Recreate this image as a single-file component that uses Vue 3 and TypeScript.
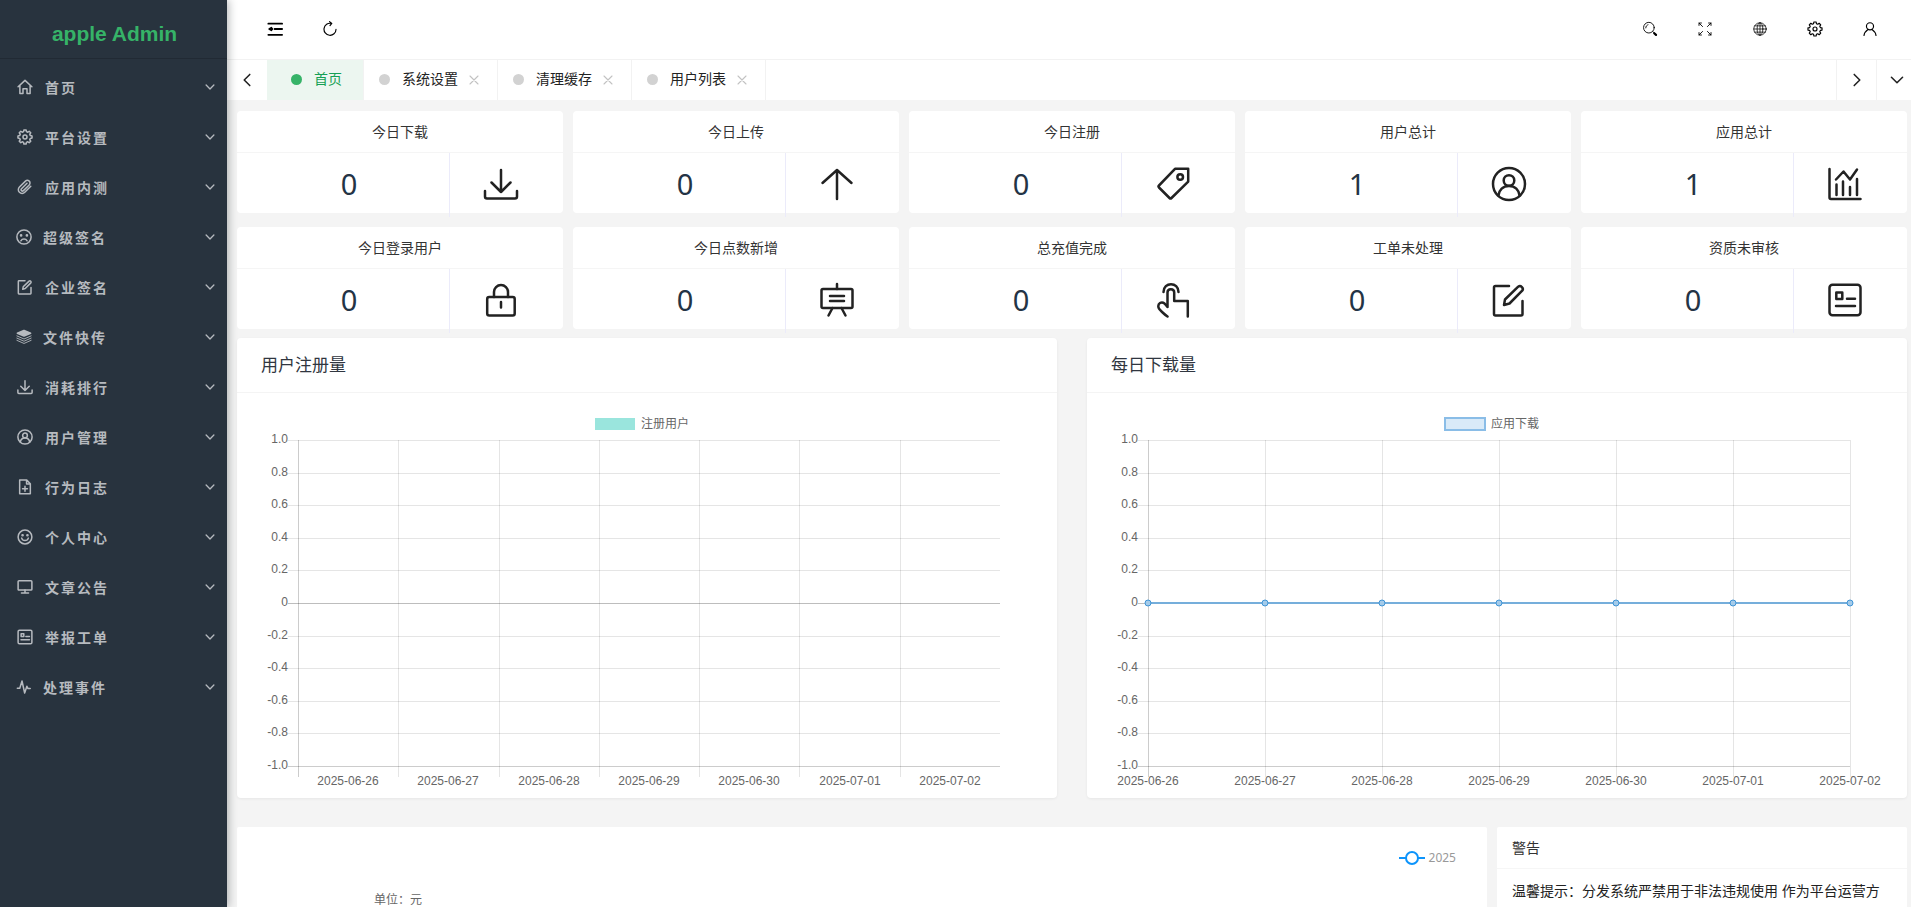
<script setup lang="ts">
import { ref } from 'vue'

interface MenuItem { label: string; icon: string; wide?: boolean }
interface Stat { title: string; value: number; icon: string }
interface Tab { label: string; closable: boolean }
interface Chart { title: string; series: string; kind: 'bar' | 'line'; columns: number[]; labels: number[] }

const menu: MenuItem[] = [
  { label: '首页', icon: 'home' },
  { label: '平台设置', icon: 'gear' },
  { label: '应用内测', icon: 'clip' },
  { label: '超级签名', icon: 'sad', wide: true },
  { label: '企业签名', icon: 'edit' },
  { label: '文件快传', icon: 'layers', wide: true },
  { label: '消耗排行', icon: 'download' },
  { label: '用户管理', icon: 'user-circle' },
  { label: '行为日志', icon: 'file' },
  { label: '个人中心', icon: 'smile' },
  { label: '文章公告', icon: 'monitor' },
  { label: '举报工单', icon: 'form' },
  { label: '处理事件', icon: 'pulse', wide: true },
]

const tools = [
  { label: '搜索', icon: 'search' },
  { label: '全屏', icon: 'fullscreen' },
  { label: '语言', icon: 'globe' },
  { label: '设置', icon: 'gear' },
  { label: '用户', icon: 'person' },
]

const tabs: Tab[] = [
  { label: '首页', closable: false },
  { label: '系统设置', closable: true },
  { label: '清理缓存', closable: true },
  { label: '用户列表', closable: true },
]
const activeTab = ref('首页')

const stats: Stat[] = [
  { title: '今日下载', value: 0, icon: 'download' },
  { title: '今日上传', value: 0, icon: 'upload' },
  { title: '今日注册', value: 0, icon: 'tag' },
  { title: '用户总计', value: 1, icon: 'user-circle' },
  { title: '应用总计', value: 1, icon: 'chart' },
  { title: '今日登录用户', value: 0, icon: 'lock' },
  { title: '今日点数新增', value: 0, icon: 'board' },
  { title: '总充值完成', value: 0, icon: 'touch' },
  { title: '工单未处理', value: 0, icon: 'edit' },
  { title: '资质未审核', value: 0, icon: 'form' },
]

const dates = ['2025-06-26', '2025-06-27', '2025-06-28', '2025-06-29', '2025-06-30', '2025-07-01', '2025-07-02']
const plot = { left: 61, right: 763, top: 47, bottom: 373, width: 702 }

const rows = ['1.0', '0.8', '0.6', '0.4', '0.2', '0', '-0.2', '-0.4', '-0.6', '-0.8', '-1.0'].map((text, i) => ({
  text,
  y: Math.round(plot.top + (i * (plot.bottom - plot.top)) / 10),
}))

const spread = (parts: number, offset: number) =>
  dates.map((_, i) => Math.round(plot.left + (plot.width * (i + offset)) / parts))

const charts: Chart[] = [
  { title: '用户注册量', series: '注册用户', kind: 'bar', columns: spread(7, 0), labels: spread(7, 0.5) },
  { title: '每日下载量', series: '应用下载', kind: 'line', columns: spread(6, 0), labels: spread(6, 0) },
]

// Eight-toothed outline centred on a 36-unit icon grid.
const gearPath =
  Array.from({ length: 8 }, (_, i) => {
    const at = (radius: number, shift: number) => {
      const angle = ((i * 45 + shift) * Math.PI) / 180
      return `${(18 + radius * Math.sin(angle)).toFixed(1)} ${(18 - radius * Math.cos(angle)).toFixed(1)}`
    }
    return `${i ? 'L' : 'M'}${at(12.4, -15)}L${at(16, -9)}L${at(16, 9)}L${at(12.4, 15)}`
  }).join('') + 'Z'
</script>

<template>
  <svg class="sprite" aria-hidden="true">
    <symbol id="home" viewBox="0 0 36 36"><path d="M2.5 17.5 18 3l15.500 14.500M6.500 14v18.500h7V22h9v10.500h7V14" /></symbol>
    <symbol id="gear" viewBox="0 0 36 36"><path :d="gearPath" /><circle cx="18" cy="18" r="4.500" /></symbol>
    <symbol id="clip" viewBox="0 0 36 36"><path d="M31 16.500 17.500 30a8.300 8.300 0 0 1-12-12L19 4.800a6 6 0 0 1 8.500 8.500L14.500 26.200a3 3 0 0 1-4.300-4.300L22.500 9.600" /></symbol>
    <symbol id="sad" viewBox="0 0 36 36"><circle cx="18" cy="18" r="16" /><circle cx="11.500" cy="14.500" r="1.300" class="solid" /><circle cx="24.500" cy="14.500" r="1.300" class="solid" /><path d="M11 26.500c3-5 11-5 14 0" /></symbol>
    <symbol id="smile" viewBox="0 0 36 36"><circle cx="18" cy="18" r="15.500" /><circle cx="12.500" cy="14" r="1.300" class="solid" /><circle cx="23.500" cy="14" r="1.300" class="solid" /><path d="M10.500 20.500c2 7.500 13 7.500 15 0" /></symbol>
    <symbol id="layers" viewBox="0 0 36 36"><path class="solid" d="M18 3 33 9.500 18 16 3 9.500z" /><path class="thin" d="M2 15.500 18 22.500l16-7M2 20.500 18 27.500l16-7M2 25.500 18 32.500l16-7" /></symbol>
    <symbol id="file" viewBox="0 0 36 36"><path d="M6 2.500h16l8 8V33H6zM21.500 3v8.500H30M18 16.500v11M12.500 22h11" /></symbol>
    <symbol id="monitor" viewBox="0 0 36 36"><rect x="2.500" y="4" width="31" height="21" rx="2" /><path d="M18 25v6M10 31.500h16" /></symbol>
    <symbol id="pulse" viewBox="0 0 36 36"><path d="M3 21h5.500l5-16.500 6 27 5-15 2.500 5H32" /></symbol>
    <symbol id="download" viewBox="0 0 36 36"><path d="M18 4v22M8.500 16.500 18 26l9.500-9.500M2 25v5.500q0 2 2 2h28q2 0 2-2V25" /></symbol>
    <symbol id="upload" viewBox="0 0 36 36"><path d="M18 33V4M3.500 17 18 4l14.500 13" /></symbol>
    <symbol id="tag" viewBox="0 0 36 36"><path d="M20 2.800h13.200v12.800L16.500 32q-1 1-2 0L4 21.500q-1-1 0-2z" /><circle cx="25.200" cy="11" r="2.800" /></symbol>
    <symbol id="user-circle" viewBox="0 0 36 36"><circle cx="18" cy="18" r="16" /><circle cx="18" cy="14.500" r="5.300" /><path d="M7.500 29.500C8 24 12 20 18 20s10 4 10.500 9.500" /></symbol>
    <symbol id="chart" viewBox="0 0 36 36"><path d="M2.500 3v28.500q0 1.500 1.500 1.500h29.500M9 13.500l7.500-8 6.500 8L30 3.500M9.500 18.500V29M16 15.500V29M23 21v8M30 13v16" /></symbol>
    <symbol id="lock" viewBox="0 0 36 36"><rect x="4.200" y="15" width="27.500" height="18.500" rx="2" /><path d="M11 15v-5a7 7 0 0 1 14 0v5M18 20v5.500" /></symbol>
    <symbol id="board" viewBox="0 0 36 36"><rect x="2.500" y="7" width="31" height="19" rx="1.500" /><path d="M18 2v5M13.500 26 9.500 33.500M22.500 26l4 7.500M11 14h14M11 19h14" /></symbol>
    <symbol id="touch" viewBox="0 0 36 36"><path d="M8.500 10C8.500-.5 23.500-.5 23.500 10M12.500 25V10.500c0-4.500 6.700-4.500 6.700 0V19h13.600v15.500M12.500 25 9.500 21.500C6.500 19 2.500 21.500 3.500 25.500 4 27.500 9.500 32.500 12.500 34.500" /></symbol>
    <symbol id="edit" viewBox="0 0 36 36"><path d="M18 4H4.500q-1.500 0-1.500 1.500V32q0 1.500 1.500 1.500H30q1.500 0 1.500-1.500V19M13 23l1-5.500L27.200 4.700c2.500-2 6 1.500 4 4L18.500 21.500z" /></symbol>
    <symbol id="form" viewBox="0 0 36 36"><rect x="2.500" y="2.800" width="31" height="30.500" rx="3" /><path d="M9.300 10.500h6v6.500h-6zM20 16.800h8M9 24h19" /></symbol>
    <symbol id="search" viewBox="0 0 36 36"><circle cx="15.500" cy="15" r="12" /><path d="M8.500 15.500c0-3.500 2-6 5-7M24.500 24l1.500 1.500M26.500 26l5.500 5" /><path class="handle" d="m27.500 27.500 4 3.800" /></symbol>
    <symbol id="fullscreen" viewBox="0 0 36 36"><path d="M4.500 10V4.500H10M4.500 4.500l8 8M26 4.500h5.500V10M31.500 4.500l-8 8M4.500 26v5.500H10M4.500 31.500l8-8M26 31.500h5.500V26M31.500 31.500l-8-8" /></symbol>
    <symbol id="globe" viewBox="0 0 36 36"><circle cx="18" cy="18" r="14" /><ellipse cx="18" cy="18" rx="6.500" ry="14" /><path d="M18 4v28M4 18h28M6 11h24M6 25h24" /></symbol>
    <symbol id="person" viewBox="0 0 36 36"><circle cx="18" cy="12" r="8" /><path d="M4.500 32.500c.5-7 4-10 9-13.500M31.500 32.500c-.5-7-4-10-9-13.500" /></symbol>
    <symbol id="collapse" viewBox="0 0 36 36"><path d="M3 6h31M17 18h17M3 31h31" /><path class="solid" d="M5 18l5-3v6z" /><path d="M9 18h3" /></symbol>
    <symbol id="refresh" viewBox="0 0 36 36"><path d="M21 5.500A13.500 13.500 0 1 0 31.500 19M17 1.500l5 4-4 5" /></symbol>
    <symbol id="chevron" viewBox="0 0 36 36"><path d="m8 13 10 10 10-10" /></symbol>
    <symbol id="close" viewBox="0 0 36 36"><path d="m9 9 18 18M27 9 9 27" /></symbol>
  </svg>

  <div class="layout">
    <aside class="sidebar">
      <a class="logo" href="#">apple Admin</a>
      <nav>
        <ul class="menu">
          <li v-for="item in menu" :key="item.label">
            <a href="#" :class="{ wide: item.wide }">
              <svg class="icon"><use :href="`#${item.icon}`" /></svg>
              <span>{{ item.label }}</span>
              <svg class="icon arrow"><use href="#chevron" /></svg>
            </a>
          </li>
        </ul>
      </nav>
    </aside>

    <div class="page">
      <header class="topbar">
        <button type="button" aria-label="收起菜单"><svg class="icon bars"><use href="#collapse" /></svg></button>
        <button type="button" aria-label="刷新"><svg class="icon fine"><use href="#refresh" /></svg></button>
        <div class="tools">
          <button v-for="tool in tools" :key="tool.label" type="button" :aria-label="tool.label">
            <svg class="icon fine" :class="tool.icon"><use :href="`#${tool.icon}`" /></svg>
          </button>
        </div>
      </header>

      <div class="tabbar">
        <button class="step" type="button" aria-label="向左"><svg class="icon left"><use href="#chevron" /></svg></button>
        <ul class="tabs">
          <li v-for="tab in tabs" :key="tab.label" :class="{ active: activeTab === tab.label, fixed: !tab.closable }">
            <a href="#" @click.prevent="activeTab = tab.label"><i class="dot"></i>{{ tab.label }}</a>
            <button v-if="tab.closable" type="button" aria-label="关闭"><svg class="icon"><use href="#close" /></svg></button>
          </li>
        </ul>
        <button class="step ruled" type="button" aria-label="向右"><svg class="icon right"><use href="#chevron" /></svg></button>
        <button class="step ruled" type="button" aria-label="更多"><svg class="icon"><use href="#chevron" /></svg></button>
      </div>

      <main class="content">
        <section class="stats">
          <article v-for="stat in stats" :key="stat.title" class="stat">
            <h3>{{ stat.title }}</h3>
            <div class="stat-body">
              <strong>{{ stat.value }}</strong>
              <span class="stat-icon"><svg><use :href="`#${stat.icon}`" /></svg></span>
            </div>
          </article>
        </section>

        <section class="charts">
          <article v-for="chart in charts" :key="chart.title" class="chart">
            <h2>{{ chart.title }}</h2>
            <svg class="plot" viewBox="0 0 820 405" role="img" :aria-label="chart.title">
              <rect v-if="chart.kind === 'bar'" x="358" y="25" width="40" height="12" fill="#9ae5dd" />
              <rect v-else class="swatch" x="358" y="25" width="40" height="12" />
              <text x="404" y="35">{{ chart.series }}</text>
              <g v-for="row in rows" :key="row.text">
                <rect :class="{ axis: row.text === '0', base: row.text === '-1.0' }" x="51" :y="row.y" width="712" height="1" />
                <text x="51" :y="row.y + 3" text-anchor="end">{{ row.text }}</text>
              </g>
              <rect v-for="(x, i) in chart.columns" :key="x" :class="{ base: i === 0 }" :x="x" y="47" width="1" height="337" />
              <text v-for="(x, i) in chart.labels" :key="dates[i]" :x="x" y="392" text-anchor="middle">{{ dates[i] }}</text>
              <g v-if="chart.kind === 'line'" class="series">
                <path d="M61 210H763" />
                <circle v-for="x in chart.columns" :key="x" :cx="x" cy="210" r="3" />
              </g>
            </svg>
          </article>
        </section>

        <section class="bottom">
          <article class="income">
            <div class="legend">
              <svg viewBox="0 0 26 16"><path d="M0 8h26" /><circle cx="13" cy="8" r="6" /></svg>
              <span>2025</span>
            </div>
            <p>单位：元</p>
          </article>
          <article class="warning">
            <h3>警告</h3>
            <p>温馨提示：分发系统严禁用于非法违规使用 作为平台运营方</p>
          </article>
        </section>
      </main>
    </div>
  </div>
</template>

<style>
body {
  margin: 0;
  background: #f4f4f4;
}
</style>

<style scoped>
.sprite {
  position: absolute;
  width: 0;
  height: 0;
}
symbol {
  fill: none;
  stroke: currentColor;
  stroke-linecap: round;
  stroke-linejoin: round;
}
.solid {
  fill: currentColor;
}
.thin {
  stroke-width: 2;
}
.handle {
  stroke-width: 5;
}
ul,
h2,
h3,
p {
  margin: 0;
  padding: 0;
  list-style: none;
  font-weight: 400;
}
a {
  color: inherit;
  text-decoration: none;
}
button {
  display: flex;
  align-items: center;
  justify-content: center;
  padding: 0;
  border: 0;
  background: none;
  color: inherit;
  font: inherit;
  cursor: pointer;
}
.icon {
  flex: none;
  width: 16px;
  height: 16px;
  stroke-width: 3;
}
.fine {
  stroke-width: 2.6;
}
.bars {
  stroke-width: 4;
}
.search,
.fullscreen {
  stroke-width: 2;
}
.globe {
  stroke-width: 1.7;
}
.layout {
  display: flex;
  height: 100vh;
  overflow: hidden;
  color: #222;
  font: 14px/24px "Noto Sans", "Noto Sans CJK SC", sans-serif;
}
.sidebar {
  z-index: 1;
  flex: none;
  width: 227px;
  background: #28333e;
  box-shadow: 2px 0 8px rgba(29, 35, 41, 0.3);
  color: #b6babf;
}
.logo {
  display: block;
  box-sizing: border-box;
  height: 59px;
  padding: 10px 0 0 2px;
  border-bottom: 1px solid #212a34;
  color: #36b368;
  font: bold 21px/48px "Liberation Sans", Arial, sans-serif;
  text-align: center;
}
.menu {
  padding-top: 3px;
}
.menu a {
  display: flex;
  align-items: center;
  gap: 12px;
  height: 50px;
  padding: 0 10px 0 17px;
  font-weight: 600;
  letter-spacing: 2px;
}
.menu a.wide {
  gap: 11px;
  padding-left: 16px;
}
.menu span {
  padding-top: 2px;
}
.menu .icon {
  stroke-width: 3.4;
}
.menu .arrow {
  width: 14px;
  height: 14px;
  margin-left: auto;
}
.page {
  display: flex;
  flex: 1;
  flex-direction: column;
  min-width: 0;
  background: #f4f4f4;
}
.topbar,
.tabbar {
  display: flex;
  flex: none;
  background: #fff;
}
.topbar {
  box-sizing: border-box;
  height: 60px;
  padding: 0 14px 0 20px;
  border-bottom: 1px solid #f2f2f2;
  color: #000;
}
.topbar button {
  width: 55px;
  height: 57px;
}
.tools {
  display: flex;
  margin-left: auto;
}
.tabbar {
  height: 40px;
  margin-right: -5px;
}
.step {
  box-sizing: border-box;
  flex: none;
  width: 40px;
}
.step .icon {
  width: 20px;
  height: 20px;
  stroke-width: 2.8;
}
.left {
  transform: rotate(90deg);
}
.right {
  transform: rotate(-90deg);
}
.ruled {
  border-left: 1px solid #f2f2f2;
}
.tabs {
  display: flex;
  flex: 1;
}
.tabs li {
  display: flex;
  box-sizing: border-box;
  gap: 8px;
  height: 40px;
  padding: 0 15px 2px 15px;
  border-right: 1px solid #f2f2f2;
}
.tabs li.fixed {
  padding: 0 21px 2px 24px;
}
.tabs li.active {
  background: #ecf6f0;
  color: #16a055;
}
.tabs a {
  display: flex;
  align-items: center;
  gap: 12px;
}
.tabs button {
  padding-top: 2px;
  color: #c2c2c2;
}
.tabs button .icon {
  stroke-width: 2.4;
}
.dot {
  width: 11px;
  height: 11px;
  border-radius: 50%;
  background: #d2d2d2;
}
.active .dot {
  background: #36b368;
}
.content {
  flex: 1;
  padding: 11px 4px 0 10px;
}
.stats {
  display: grid;
  grid-template-columns: repeat(5, 1fr);
  gap: 14px 10px;
}
.stat {
  height: 102px;
  border-radius: 4px;
  background: #fff;
  text-align: center;
}
.stat h3 {
  height: 41px;
  border-bottom: 1px solid #f5f5f5;
  color: #333;
  font-size: 14px;
  line-height: 41px;
}
.stat-body {
  display: grid;
  grid-template-columns: 1fr 113px;
  height: 64px;
}
.stat-body strong {
  padding-left: 12px;
  border-right: 1px solid #ebebfa;
  color: #233445;
  font-weight: 400;
  font-size: 29px;
  line-height: 62px;
}
.stat-icon {
  display: flex;
  align-items: center;
  justify-content: center;
  padding: 0 12px 2px 0;
}
.stat-icon svg {
  width: 36px;
  height: 36px;
  stroke-width: 2.5;
}
.charts {
  display: grid;
  grid-template-columns: 1fr 1fr;
  gap: 30px;
  margin-top: 9px;
}
.chart {
  border-radius: 4px;
  background: #fff;
  box-shadow: 0 1px 3px rgba(0, 0, 0, 0.06);
}
.chart h2 {
  height: 54px;
  padding-left: 24px;
  border-bottom: 1px solid #f4f4f4;
  color: #303640;
  font-size: 17px;
  line-height: 54px;
}
.plot {
  display: block;
  width: 100%;
  fill: rgba(0, 0, 0, 0.1);
}
.plot text {
  fill: #666;
  font: 12px "Liberation Sans", Arial, "Noto Sans CJK SC", sans-serif;
}
.plot .axis {
  fill: rgba(0, 0, 0, 0.26);
}
.plot .base {
  fill: rgba(0, 0, 0, 0.2);
}
.swatch,
.series {
  fill: #d9eaf8;
  stroke: #8abde7;
  stroke-width: 2;
}
.series {
  stroke: #75aedb;
}
.series circle {
  stroke-width: 1;
  stroke: #3f94d6;
  fill: #a5cbe9;
}
.bottom {
  display: grid;
  grid-template-columns: 1250fr 410fr;
  gap: 10px;
  margin-top: 29px;
}
.bottom article {
  height: 400px;
  border-radius: 2px;
  background: #fff;
}
.income {
  color: #666;
  font-size: 12px;
}
.legend {
  display: flex;
  align-items: center;
  justify-content: flex-end;
  gap: 4px;
  height: 62px;
  padding-right: 31px;
  color: #999;
}
.legend svg {
  width: 26px;
  height: 16px;
  fill: #fff;
  stroke: #0d94fb;
  stroke-width: 2;
}
.income p {
  padding: 4px 0 0 137px;
  line-height: 14px;
}
.warning h3 {
  padding: 0 15px;
  border-bottom: 1px solid #f6f6f6;
  color: #333;
  font-size: 14px;
  line-height: 41px;
}
.warning p {
  padding: 10px 15px;
}
</style>
